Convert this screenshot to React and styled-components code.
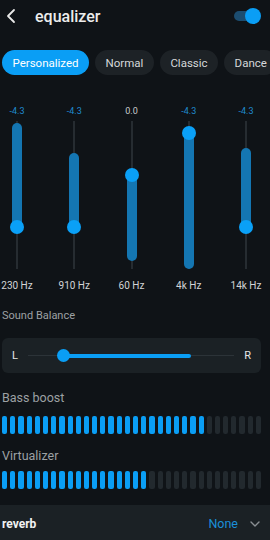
import styled, { createGlobalStyle } from 'styled-components';

const GlobalStyle = createGlobalStyle`
  * { margin: 0; padding: 0; box-sizing: border-box; }
  body {
    background: #0f1317;
    font-family: Roboto, "Liberation Sans", sans-serif;
    overflow: hidden;
  }
`;

const Page = styled.main`
  width: 270px;
  height: 540px;
  display: flex;
  flex-direction: column;
  overflow: hidden;
`;

const Header = styled.header`
  height: 32px;
  display: flex;
  align-items: center;
  padding: 0 10px 0 5px;
`;

const Title = styled.h1`
  font-size: 16px;
  font-weight: 500;
  color: #ececec;
  margin-left: 18px;
  flex: 1;
`;

const Toggle = styled.div`
  position: relative;
  width: 26px;
  height: 16px;
  display: flex;
  align-items: center;

  &::before {
    content: '';
    width: 24px;
    height: 10px;
    border-radius: 5px;
    background: #1c4d70;
  }
  &::after {
    content: '';
    position: absolute;
    right: -1px;
    top: 0;
    width: 16px;
    height: 16px;
    border-radius: 50%;
    background: #0a9ef5;
  }
`;

const Chips = styled.div`
  display: flex;
  gap: 6px;
  padding: 0 0 0 2px;
  margin-top: 18px;
  white-space: nowrap;
`;

const Chip = styled.div`
  height: 25px;
  border-radius: 13px;
  padding: 0 10.5px;
  display: flex;
  align-items: center;
  font-size: 11.5px;
  flex-shrink: 0;
  color: ${p => (p.$active ? '#ffffff' : '#d6d8da')};
  background: ${p => (p.$active ? '#0a9ef5' : '#1d2226')};
`;

const Bands = styled.div`
  display: flex;
  justify-content: space-between;
  padding: 0 9px 0 2px;
  margin-top: 30px;
`;

const Band = styled.div`
  width: 30px;
  display: flex;
  flex-direction: column;
  align-items: center;
`;

const Value = styled.span`
  font-size: 9px;
  line-height: 12px;
  color: ${p => (p.$zero ? '#c9cbcd' : '#1f8bd0')};
`;

const Track = styled.div`
  position: relative;
  width: 14px;
  height: 148px;
  margin-top: 4px;

  &::before {
    content: '';
    position: absolute;
    left: 6px;
    top: 0;
    bottom: 0;
    width: 2px;
    background: #262c31;
  }
`;

const Fill = styled.div`
  position: absolute;
  left: 2px;
  width: 10px;
  border-radius: 5px;
  background: #1476b2;
`;

const Knob = styled.div`
  position: absolute;
  left: 0;
  width: 14px;
  height: 14px;
  margin-top: -7px;
  border-radius: 50%;
  background: #0aa0f7;
`;

const Freq = styled.span`
  margin-top: 11px;
  font-size: 10px;
  color: #d2d4d6;
  white-space: nowrap;
`;

const SectionLabel = styled.div`
  font-size: ${p => p.$size || 11}px;
  color: #9da1a4;
  padding-left: 2px;
  margin-top: ${p => p.$top}px;
  line-height: 14px;
`;

const Card = styled.div`
  margin: 15px 9px 0 2px;
  height: 35px;
  border-radius: 6px;
  background: #1b2125;
  display: flex;
  align-items: center;
  padding: 0 10px 0 10px;
  gap: 10px;
  font-size: 11px;
  color: #e6e6e6;
`;

const BalanceTrack = styled.div`
  position: relative;
  flex: 1;
  height: 14px;

  &::before {
    content: '';
    position: absolute;
    left: 0;
    right: 0;
    top: 6px;
    height: 1px;
    background: #2c3338;
  }
`;

const BalanceFill = styled.div`
  position: absolute;
  top: 5px;
  height: 4px;
  border-radius: 2px;
  background: #0a9ef5;
`;

const BalanceKnob = styled.div`
  position: absolute;
  top: 0;
  width: 13px;
  height: 13px;
  margin-left: -6px;
  border-radius: 50%;
  background: #0a9ef5;
`;

const Segments = styled.div`
  display: flex;
  gap: 3px;
  padding: 0 9px 0 2px;
  margin-top: ${p => p.$top}px;
`;

const Segment = styled.div`
  flex: 1;
  height: 18px;
  border-radius: 2px;
  background: ${p => (p.$on ? '#0a9ef5' : '#22292e')};
`;

const Reverb = styled.div`
  margin-top: auto;
  height: 35px;
  background: #1b2125;
  display: flex;
  align-items: center;
  padding: 2px 10px 0 2px;
`;

const ReverbLabel = styled.span`
  flex: 1;
  font-size: 12px;
  font-weight: 700;
  color: #f2f2f2;
`;

const ReverbValue = styled.span`
  font-size: 12.5px;
  color: #1a8fd8;
  margin-right: 12px;
`;

const bands = [
  { v: '-4.3', f: '230 Hz', top: 7, bottom: 106, knob: 'bottom' },
  { v: '-4.3', f: '910 Hz', top: 37, bottom: 106, knob: 'bottom' },
  { v: '0.0', f: '60 Hz', top: 54, bottom: 140, knob: 'top', zero: true },
  { v: '-4.3', f: '4k Hz', top: 12, bottom: 148, knob: 'top' },
  { v: '-4.3', f: '14k Hz', top: 32, bottom: 106, knob: 'bottom' },
];

function SegmentBar({ on, top }) {
  return (
    <Segments $top={top}>
      {Array.from({ length: 32 }, (_, i) => (
        <Segment key={i} $on={i < on} />
      ))}
    </Segments>
  );
}

export default function App() {
  return (
    <>
      <GlobalStyle />
      <Page>
        <Header>
          <svg width="12" height="16" viewBox="0 0 12 16" fill="none">
            <path d="M9 2 L3 8 L9 14" stroke="#e8e8e8" strokeWidth="1.8" strokeLinecap="round" strokeLinejoin="round" />
          </svg>
          <Title>equalizer</Title>
          <Toggle />
        </Header>

        <Chips>
          <Chip $active>Personalized</Chip>
          <Chip>Normal</Chip>
          <Chip>Classic</Chip>
          <Chip>Dance</Chip>
        </Chips>

        <Bands>
          {bands.map(b => (
            <Band key={b.f}>
              <Value $zero={b.zero}>{b.v}</Value>
              <Track>
                <Fill style={{ top: b.top - 5, height: b.bottom - b.top + 5 }} />
                <Knob style={{ top: b.knob === 'top' ? b.top : b.bottom }} />
              </Track>
              <Freq>{b.f}</Freq>
            </Band>
          ))}
        </Bands>

        <SectionLabel $top={18}>Sound Balance</SectionLabel>
        <Card>
          <span>L</span>
          <BalanceTrack>
            <BalanceFill style={{ left: 35, width: 128 }} />
            <BalanceKnob style={{ left: 35 }} />
          </BalanceTrack>
          <span>R</span>
        </Card>

        <SectionLabel $size={12.5} $top={18}>Bass boost</SectionLabel>
        <SegmentBar on={25} top={11} />
        <SectionLabel $size={12.5} $top={15}>Virtualizer</SectionLabel>
        <SegmentBar on={18} top={8} />

        <Reverb>
          <ReverbLabel>reverb</ReverbLabel>
          <ReverbValue>None</ReverbValue>
          <svg width="10" height="6" viewBox="0 0 10 6" fill="none">
            <path d="M1 1 L5 5 L9 1" stroke="#8a8f93" strokeWidth="1.4" strokeLinecap="round" strokeLinejoin="round" />
          </svg>
        </Reverb>
      </Page>
    </>
  );
}
